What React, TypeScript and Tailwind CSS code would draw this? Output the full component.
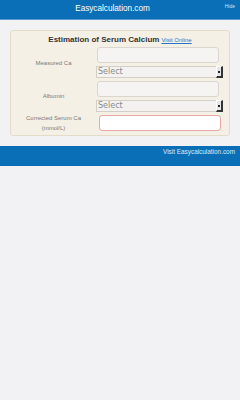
export default function App() {
  return (
    <div className="min-h-[400px] w-[240px] bg-[#f2f1f4] font-['Liberation_Sans',Arial,sans-serif]">
      {/* Header */}
      <div className="relative flex h-[19px] items-center justify-center bg-[#0a6fb6] pr-[15px] text-white">
        <span className="text-[8.2px] leading-none">Easycalculation.com</span>
        <span className="absolute right-[5px] top-[4px] text-[5px] leading-none text-[#cfe3f3]">Hide</span>
      </div>
      <div className="h-px bg-[#5b9bd0]" />

      {/* Card */}
      <div className="mx-[10px] mt-[10px] rounded-[3px] border border-[#e3dccb] bg-[#f4f0e6] pb-[2px]">
        <div className="flex h-[16px] items-center justify-center gap-[2px] pt-[1px]">
          <span className="text-[8px] font-bold leading-none text-[#333]">Estimation of Serum Calcium</span>
          <span className="text-[6px] leading-none text-[#2a73c9] underline">Visit Online</span>
        </div>

        <div className="flex">
          <div className="flex w-[85px] items-center justify-center pt-[2px] text-[6px] text-[#7a7a7a]">Measured Ca</div>
          <div className="flex flex-col">
            <div className="ml-[1px] h-[16px] w-[122px] rounded-[3px] border border-[#d9d6d0] bg-[#f5f4f2]" />
            <Select />
          </div>
        </div>

        <div className="mt-[3px] flex">
          <div className="flex w-[85px] items-center justify-center text-[6px] text-[#7a7a7a]">Albumin</div>
          <div className="flex flex-col">
            <div className="ml-[1px] h-[16px] w-[122px] rounded-[3px] border border-[#d9d6d0] bg-[#f5f4f2]" />
            <Select />
          </div>
        </div>

        <div className="mt-[1px] flex items-center">
          <div className="flex w-[85px] flex-col items-center text-[6px] leading-[10px] text-[#7a7a7a]">
            <span>Corrected Serum Ca</span>
            <span>(mmol/L)</span>
          </div>
          <div className="ml-[3px] h-[16px] w-[122px] rounded-[3px] border border-[#eaa9a6] bg-white" />
        </div>
      </div>

      {/* Footer */}
      <div className="mt-[10px] flex h-[20px] justify-end bg-[#0a6fb6] pr-[5px] pt-[3px]">
        <span className="text-[6.4px] leading-none text-[#dcebf7]">Visit Easycalculation.com</span>
      </div>
    </div>
  );
}

function Select() {
  return (
    <div className="mt-[3px] flex h-[12px] w-[127px] items-center border border-[#d2cfc9] bg-[#f3f2f0]">
      <span className="flex-1 pl-[1px] font-['DejaVu_Sans',sans-serif] text-[8px] leading-none text-[#8a8a8a]">Select</span>
      <div className="mr-[-1px] flex h-[12px] w-[7px] items-center justify-center border-b-2 border-l border-r-2 border-t border-b-[#333] border-l-[#fff] border-r-[#333] border-t-[#fff] bg-[#e6e6e6]">
        <div className="h-[2px] w-[2px] bg-[#222]" />
      </div>
    </div>
  );
}
